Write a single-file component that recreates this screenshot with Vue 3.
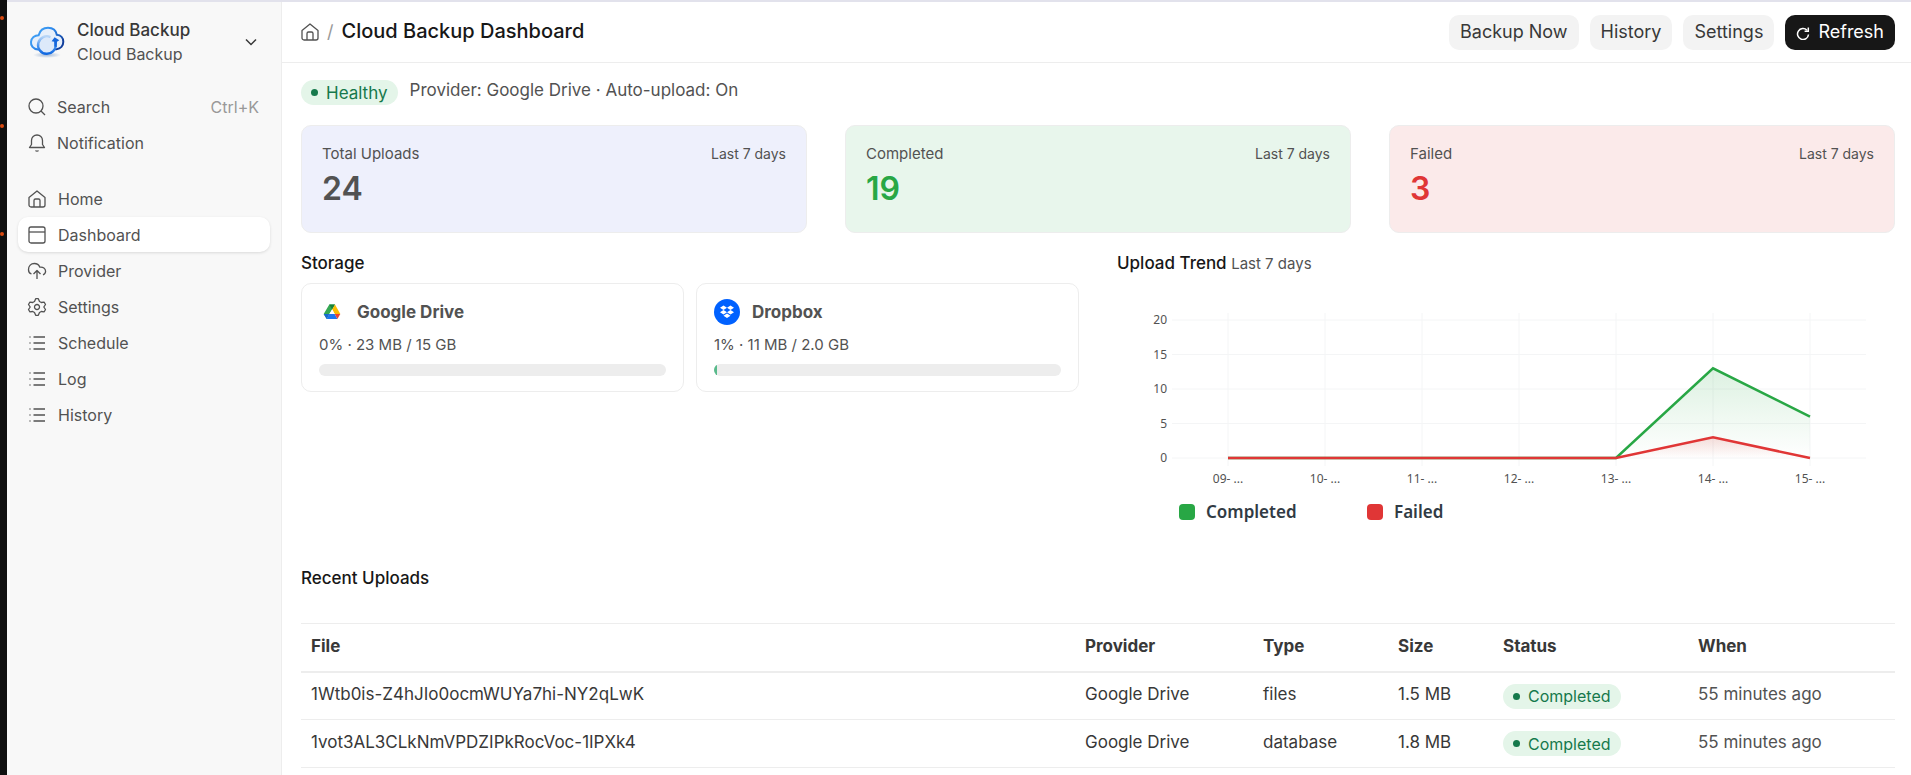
<template>
  <div class="desk">
    <div class="desk-edge" aria-hidden="true">
      <span v-for="n in 3" :key="n" class="desk-dot"></span>
    </div>

    <div class="window">
      <aside class="sidebar">
        <button type="button" class="app-switcher">
          <svg class="app-logo" viewBox="0 0 36 34" aria-hidden="true">
            <defs>
              <linearGradient id="cloudStroke" x1="0" y1="0" x2="1" y2="0.6">
                <stop offset="0" stop-color="#4fb0fb" />
                <stop offset="0.55" stop-color="#2b86ea" />
                <stop offset="1" stop-color="#123f9c" />
              </linearGradient>
              <linearGradient id="arrowStroke" x1="0" y1="0" x2="0" y2="1">
                <stop offset="0" stop-color="#b9d6f7" />
                <stop offset="0.6" stop-color="#3f8eee" />
                <stop offset="1" stop-color="#1168e0" />
              </linearGradient>
              <radialGradient id="cloudShadow">
                <stop offset="0" stop-color="#8fa9cc" stop-opacity="0.8" />
                <stop offset="1" stop-color="#8fa9cc" stop-opacity="0" />
              </radialGradient>
            </defs>
            <ellipse cx="18" cy="30" rx="14" ry="3" fill="url(#cloudShadow)" />
            <path
              d="M9 24.500C4 24 1.600 20.500 2 16.800C2.400 13 5.600 10.200 9.600 10.200C11 5 15 2.800 19 2.800C23.800 2.800 27 5.600 27.800 9.800C31.800 10 34.300 13 34.300 16.800C34.300 20.800 31.600 23.800 27.500 24.300Z"
              fill="#e6effb"
              stroke="url(#cloudStroke)"
              stroke-width="2"
            />
            <circle cx="17.800" cy="20" r="8.800" fill="#dde9fa" />
            <path
              d="M21.500 12A8.800 8.800 0 1 0 26.600 19V15"
              fill="none"
              stroke="url(#arrowStroke)"
              stroke-width="2.400"
            />
            <path d="M22.600 16.300L25.600 12.200L30.300 15.200L28 16.800L27.700 22L25.400 21.500L25.200 16.800Z" fill="#1667dc" />
          </svg>
          <span class="app-names">
            <span class="app-title">Cloud Backup</span>
            <span class="app-subtitle">Cloud Backup</span>
          </span>
          <svg class="chevron" viewBox="0 0 16 16" aria-hidden="true">
            <path d="M3 5.500L8 10.500L13 5.500" />
          </svg>
        </button>

        <nav class="nav">
          <a v-for="item in tools" :key="item.label" href="#" class="nav-item tool">
            <svg class="icon" viewBox="0 0 18 18" aria-hidden="true">
              <path v-for="d in icons[item.icon]" :key="d" :d="d" />
            </svg>
            <span>{{ item.label }}</span>
            <kbd v-if="item.shortcut" class="shortcut">{{ item.shortcut }}</kbd>
          </a>
        </nav>

        <nav class="nav">
          <a
            v-for="item in pages"
            :key="item.label"
            href="#"
            class="nav-item"
            :class="{ active: item.label === 'Dashboard' }"
          >
            <svg class="icon" viewBox="0 0 18 18" aria-hidden="true">
              <path v-for="d in icons[item.icon]" :key="d" :d="d" />
            </svg>
            <span>{{ item.label }}</span>
          </a>
        </nav>
      </aside>

      <main class="main">
        <header class="page-head">
          <div class="breadcrumb">
            <a href="#" class="home-link" aria-label="Home">
              <svg class="icon" viewBox="0 0 18 18" aria-hidden="true">
                <path v-for="d in icons.home" :key="d" :d="d" />
              </svg>
            </a>
            <span class="slash">/</span>
            <h1>Cloud Backup Dashboard</h1>
          </div>
          <div class="actions">
            <button type="button" class="btn">Backup Now</button>
            <button type="button" class="btn">History</button>
            <button type="button" class="btn">Settings</button>
            <button type="button" class="btn primary">
              <svg class="refresh" viewBox="0 0 14 14" aria-hidden="true">
                <path d="M12.500 8.500A5.500 5.500 0 1 1 11 4.200" />
                <path d="M12.300 1.500V5.200H8.600" />
              </svg>
              Refresh
            </button>
          </div>
        </header>

        <div class="content">
          <div class="status-line">
            <span class="badge healthy">Healthy</span>
            <span>Provider: Google Drive · Auto-upload: On</span>
          </div>

          <section class="stats">
            <div v-for="stat in stats" :key="stat.label" class="stat" :class="stat.tone">
              <div class="stat-head">
                <span class="stat-label">{{ stat.label }}</span>
                <span class="stat-range">Last 7 days</span>
              </div>
              <div class="stat-value">{{ stat.value }}</div>
            </div>
          </section>

          <div class="halves">
            <section>
              <h2>Storage</h2>
              <div class="drives">
                <div v-for="drive in drives" :key="drive.name" class="drive">
                  <div class="drive-name">
                    <svg v-if="drive.logo === 'google'" viewBox="0 0 26 26" aria-hidden="true">
                      <path d="M10.300 5.500H16L10 15.500L7.700 20L4.700 14.900Z" fill="#34a853" />
                      <path d="M10.300 5.500H16L13.200 10.500Z" fill="#188038" />
                      <path d="M16 5.500L21.300 15H15.700L13.200 10.500Z" fill="#fbbc04" />
                      <path d="M10.200 15H15.700L18.400 20H7.700Z" fill="#1e75f0" />
                      <path d="M4.700 15H10.200L7.700 20Z" fill="#1967d2" />
                      <path d="M15.700 15H21.300L18.400 20Z" fill="#ea4335" />
                      <path d="M13.200 10.500L15.700 15H10.500Z" fill="#fff" />
                    </svg>
                    <svg v-else viewBox="0 0 26 26" aria-hidden="true">
                      <circle cx="13" cy="13" r="13" fill="#0061ff" />
                      <path
                        d="M9.500 6.500L13 8.700L9.500 11L6 8.700ZM16.500 6.500L20 8.700L16.500 11L13 8.700ZM9.500 11L13 13.300L9.500 15.500L6 13.300ZM16.500 11L20 13.300L16.500 15.500L13 13.300ZM13 14.500L16.500 16.700L13 19L9.500 16.700Z"
                        fill="#fff"
                      />
                    </svg>
                    <span>{{ drive.name }}</span>
                  </div>
                  <div class="drive-usage">{{ drive.usage }}</div>
                  <div class="meter">
                    <div class="meter-fill" :style="{ width: drive.percent + '%' }"></div>
                  </div>
                </div>
              </div>
            </section>

            <section>
              <h2>Upload Trend <small>Last 7 days</small></h2>
              <svg class="chart" viewBox="0 0 778 262" role="img" aria-label="Upload trend">
                <defs>
                  <linearGradient id="fillCompleted" x1="0" y1="0" x2="0" y2="1">
                    <stop offset="0" stop-color="#28a745" stop-opacity="0.16" />
                    <stop offset="1" stop-color="#28a745" stop-opacity="0" />
                  </linearGradient>
                  <linearGradient id="fillFailed" x1="0" y1="0" x2="0" y2="1">
                    <stop offset="0" stop-color="#e03636" stop-opacity="0.16" />
                    <stop offset="1" stop-color="#e03636" stop-opacity="0" />
                  </linearGradient>
                </defs>
                <g v-for="tick in ticks" :key="tick">
                  <line class="grid" x1="55" x2="749" :y1="yOf(tick)" :y2="yOf(tick)" />
                  <text class="axis" x="50" :y="yOf(tick) + 4" text-anchor="end">{{ tick }}</text>
                </g>
                <g v-for="(day, i) in days" :key="day">
                  <line class="grid" :x1="xOf(i)" :x2="xOf(i)" y1="37" y2="190" />
                  <text class="axis" :x="xOf(i)" y="207" text-anchor="middle">{{ day }}- ...</text>
                </g>
                <g v-for="line in series" :key="line.name">
                  <path :d="areaPath(line.values)" :fill="`url(#fill${line.name})`" />
                  <path class="line" :d="linePath(line.values)" :stroke="line.color" />
                </g>
                <g v-for="(line, i) in series" :key="line.name">
                  <rect :x="62 + i * 188" y="228" width="16" height="16" rx="4" :fill="line.color" />
                  <text class="legend" :x="89 + i * 188" y="242">{{ line.name }}</text>
                </g>
              </svg>
            </section>
          </div>

          <section class="recent">
            <h2>Recent Uploads</h2>
            <table class="uploads">
              <thead>
                <tr>
                  <th>File</th>
                  <th class="col-provider">Provider</th>
                  <th class="col-type">Type</th>
                  <th class="col-size">Size</th>
                  <th class="col-status">Status</th>
                  <th class="col-when">When</th>
                </tr>
              </thead>
              <tbody>
                <tr v-for="upload in uploads" :key="upload.file">
                  <td>{{ upload.file }}</td>
                  <td>Google Drive</td>
                  <td>{{ upload.type }}</td>
                  <td>{{ upload.size }}</td>
                  <td class="status-cell"><span class="badge">Completed</span></td>
                  <td class="muted">55 minutes ago</td>
                </tr>
              </tbody>
            </table>
          </section>
        </div>
      </main>
    </div>
  </div>
</template>

<script setup>
  const list = ['M1.500 3H2.500M1.500 9H2.500M1.500 15H2.500', 'M5.500 3H17M5.500 9H17M5.500 15H17']

  // 18px grid, stroke only
  const icons = {
    search: ['M15 8A7 7 0 1 1 1 8A7 7 0 1 1 15 8Z', 'M13 13L17 17'],
    bell: [
      'M1.500 13.500H16.500L14.500 10.500V6.500C14.500 3 12 1 9 1C6 1 3.500 3 3.500 6.500V10.500Z',
      'M7.500 16.500C8 17.300 10 17.300 10.500 16.500',
    ],
    home: [
      'M1 7.500L9 1L17 7.500V15A2 2 0 0 1 15 17H3A2 2 0 0 1 1 15Z',
      'M6 17V10.500A1.500 1.500 0 0 1 7.500 9H10.500A1.500 1.500 0 0 1 12 10.500V17',
    ],
    dashboard: ['M3 1H15A2 2 0 0 1 17 3V15A2 2 0 0 1 15 17H3A2 2 0 0 1 1 15V3A2 2 0 0 1 3 1Z', 'M1 6H17'],
    upload: [
      'M3.500 12C1.300 11.300 0.500 9.700 0.500 7.700C0.500 4 3 1.500 6.300 1.500C9 1.500 11 3 11.800 5.200C15 4.700 17.600 6.500 17.600 9.300C17.600 11 16.600 12.200 15 12.800',
      'M9 17V8.500M5.500 12L9 8.500L12.500 12',
    ],
    gear: [
      'M7.700 0.700H10.300L11.500 3.500L13.300 4.500L16.200 4.200L17.500 6.500L15.800 9L17.500 11.500L16.200 13.800L13.300 13.500L11.500 14.500L10.300 17.300H7.700L6.500 14.500L4.700 13.500L1.800 13.800L0.500 11.500L2.200 9L0.500 6.500L1.800 4.200L4.700 4.500L6.500 3.500Z',
      'M11.500 9A2.500 2.500 0 1 1 6.500 9A2.500 2.500 0 1 1 11.500 9Z',
    ],
    list,
  }

  const tools = [
    { label: 'Search', icon: 'search', shortcut: 'Ctrl+K' },
    { label: 'Notification', icon: 'bell' },
  ]

  const pages = [
    { label: 'Home', icon: 'home' },
    { label: 'Dashboard', icon: 'dashboard' },
    { label: 'Provider', icon: 'upload' },
    { label: 'Settings', icon: 'gear' },
    { label: 'Schedule', icon: 'list' },
    { label: 'Log', icon: 'list' },
    { label: 'History', icon: 'list' },
  ]

  const stats = [
    { label: 'Total Uploads', value: 24, tone: 'total' },
    { label: 'Completed', value: 19, tone: 'completed' },
    { label: 'Failed', value: 3, tone: 'failed' },
  ]

  const drives = [
    { name: 'Google Drive', logo: 'google', usage: '0% · 23 MB / 15 GB', percent: 0 },
    { name: 'Dropbox', logo: 'dropbox', usage: '1% · 11 MB / 2.0 GB', percent: 1 },
  ]

  const ticks = [0, 5, 10, 15, 20]
  const days = ['09', '10', '11', '12', '13', '14', '15']
  const series = [
    { name: 'Completed', color: '#28a745', values: [0, 0, 0, 0, 0, 13, 6] },
    { name: 'Failed', color: '#e03636', values: [0, 0, 0, 0, 0, 3, 0] },
  ]

  const uploads = [
    { file: '1Wtb0is-Z4hJIo0ocmWUYa7hi-NY2qLwK', type: 'files', size: '1.5 MB' },
    { file: '1vot3AL3CLkNmVPDZIPkRocVoc-1IPXk4', type: 'database', size: '1.8 MB' },
  ]

  function xOf(index) {
    return 111 + index * 97
  }

  function yOf(value) {
    return 182 - value * 6.9
  }

  function linePath(values) {
    return 'M' + values.map((value, i) => `${xOf(i)} ${yOf(value)}`).join('L')
  }

  function areaPath(values) {
    return `${linePath(values)}L${xOf(values.length - 1)} ${yOf(0)}L${xOf(0)} ${yOf(0)}Z`
  }
</script>

<style>
  body {
    margin: 0;
    background-color: #fff;
  }
</style>

<style scoped>
  .desk {
    display: flex;
    min-height: 100vh;
    font-family: Inter, 'Liberation Sans', sans-serif;
    font-size: 17px;
    line-height: 24px;
    color: #383838;
  }

  .desk *,
  .desk {
    box-sizing: border-box;
  }

  .desk-edge {
    display: flex;
    flex: none;
    flex-direction: column;
    gap: 104px;
    width: 7px;
    padding-top: 16px;
    background-color: #0f0f0f;
  }

  .desk-dot {
    width: 4px;
    height: 4px;
    border-radius: 50%;
    background-color: #d9480f;
  }

  .window {
    display: flex;
    flex: 1;
    min-width: 0;
    border-top: 2px solid #e2e2ec;
  }

  button {
    border: none;
    font-family: inherit;
    cursor: pointer;
  }

  .icon {
    flex: none;
    width: 18px;
    height: 18px;
    fill: none;
    stroke: #525252;
    stroke-width: 1.3;
    stroke-linejoin: round;
    overflow: visible;
  }

  /* Sidebar */
  .sidebar {
    flex: none;
    width: 275px;
    padding: 14px 11px;
    border-right: 1px solid #ededed;
    background-color: #f8f8f8;
  }

  .app-switcher {
    display: flex;
    align-items: center;
    width: 100%;
    height: 52px;
    padding: 0 11px;
    background: none;
    text-align: left;
  }

  .app-logo {
    width: 36px;
    height: 34px;
  }

  .app-names {
    display: flex;
    flex: 1;
    flex-direction: column;
    margin-left: 12px;
    line-height: 24px;
    color: #525252;
  }

  .app-title {
    font-size: 17px;
    font-weight: 500;
    color: #383838;
  }

  .app-subtitle {
    font-size: 16px;
  }

  .chevron {
    width: 16px;
    height: 16px;
    fill: none;
    stroke: #383838;
    stroke-width: 1.5;
  }

  .nav {
    display: flex;
    flex-direction: column;
    gap: 1px;
    margin-top: 21px;
  }

  .nav-item {
    display: flex;
    align-items: center;
    gap: 12px;
    height: 35px;
    padding: 0 11px 0 10px;
    border-radius: 10px;
    color: #525252;
    font-size: 16px;
    text-decoration: none;
  }

  .nav-item.tool {
    gap: 11px;
  }

  .nav-item.active {
    background-color: #fff;
    box-shadow: 0 1px 3px rgba(0, 0, 0, 0.12);
  }

  .shortcut {
    margin-left: auto;
    font-family: inherit;
    color: #999;
  }

  /* Page head */
  .main {
    flex: 1;
    min-width: 0;
  }

  .page-head {
    display: flex;
    align-items: center;
    justify-content: space-between;
    height: 61px;
    padding: 0 16px 0 19px;
    border-bottom: 1px solid #ededed;
  }

  .breadcrumb {
    display: flex;
    align-items: center;
    gap: 8px;
  }

  .home-link {
    display: flex;
  }

  .slash {
    font-size: 18px;
    color: #999;
  }

  h1,
  h2 {
    margin: 0;
    font-weight: 500;
    color: #171717;
  }

  h1 {
    padding-bottom: 2px;
    font-size: 20px;
    line-height: 24px;
  }

  h2 {
    font-size: 17px;
    line-height: 24px;
  }

  .actions {
    display: flex;
    gap: 11px;
  }

  .btn {
    display: flex;
    align-items: center;
    gap: 8px;
    height: 35px;
    padding: 0 11px 2px;
    border-radius: 10px;
    background-color: #f3f3f3;
    color: #383838;
    font-size: 18px;
  }

  .btn.primary {
    background-color: #171717;
    color: #fff;
  }

  .refresh {
    width: 14px;
    height: 14px;
    margin-top: 3px;
    fill: none;
    stroke: currentColor;
    stroke-width: 1.5;
  }

  /* Content */
  .content {
    padding: 15px 16px 8px 19px;
  }

  .status-line {
    display: flex;
    gap: 12px;
    height: 47px;
    color: #525252;
  }

  .badge {
    display: inline-flex;
    align-items: center;
    gap: 8px;
    height: 25px;
    padding: 0 10px;
    border-radius: 13px;
    background-color: #e4f5e9;
    color: #16794c;
    font-size: 16px;
    vertical-align: middle;
  }

  .badge::before {
    content: '';
    width: 7px;
    height: 7px;
    border-radius: 50%;
    background-color: currentColor;
  }

  .badge.healthy {
    margin-top: 2px;
    font-size: 17px;
  }

  .stats {
    display: grid;
    grid-template-columns: repeat(3, 1fr);
    gap: 38px;
  }

  .stat {
    height: 108px;
    padding: 18px 20px;
    border: 1px solid #ededed;
    border-radius: 10px;
    color: #525252;
  }

  .stat.total {
    background-color: #eef0fc;
  }

  .stat.completed {
    background-color: #e8f6ec;
  }

  .stat.failed {
    background-color: #fbeaea;
  }

  .stat-head {
    display: flex;
    justify-content: space-between;
    line-height: 20px;
  }

  .stat-label {
    font-size: 15px;
  }

  .stat-range {
    font-size: 14px;
  }

  .stat-value {
    margin-top: 5px;
    font-size: 32px;
    font-weight: 600;
    line-height: 40px;
  }

  .stat.completed .stat-value {
    color: #28a745;
  }

  .stat.failed .stat-value {
    color: #e03636;
  }

  .halves {
    display: grid;
    grid-template-columns: 1fr 1fr;
    gap: 38px;
    margin-top: 18px;
  }

  h2 small {
    font-size: 15px;
    font-weight: 400;
    color: #525252;
  }

  .drives {
    display: grid;
    grid-template-columns: 1fr 1fr;
    gap: 12px;
    margin-top: 8px;
  }

  .drive {
    padding: 15px 17px;
    border: 1px solid #ededed;
    border-radius: 10px;
    color: #525252;
  }

  .drive-name {
    display: flex;
    align-items: center;
    gap: 12px;
    font-weight: 700;
    line-height: 26px;
  }

  .drive-name svg {
    width: 26px;
    height: 26px;
  }

  .drive-usage {
    margin: 8px 0 7px;
    font-size: 15px;
    line-height: 24px;
  }

  .meter {
    height: 12px;
    overflow: hidden;
    border-radius: 6px;
    background-color: #ededed;
  }

  .meter-fill {
    height: 100%;
    background-color: #59ba8b;
  }

  .chart {
    display: block;
    width: 100%;
  }

  .grid {
    stroke: #f4f5f6;
    stroke-width: 1;
  }

  .line {
    fill: none;
    stroke-width: 2.5;
  }

  .axis {
    font-family: 'Noto Sans', sans-serif;
    font-size: 12px;
    fill: #525252;
  }

  .legend {
    font-family: 'Noto Sans', sans-serif;
    font-size: 17px;
    font-weight: 600;
    fill: #313b44;
  }

  .recent {
    margin-top: 28px;
  }

  .uploads {
    width: 100%;
    margin-top: 33px;
    border-collapse: collapse;
    table-layout: fixed;
    text-align: left;
  }

  .uploads th,
  .uploads td {
    height: 48px;
    padding: 0 10px 4px;
    border-top: 1px solid #ededed;
    border-bottom: 1px solid #ededed;
  }

  .uploads th {
    padding-bottom: 2px;
    border-bottom-width: 2px;
    font-weight: 700;
  }

  .uploads .status-cell {
    padding-bottom: 0;
  }

  .col-provider {
    width: 178px;
  }

  .col-type {
    width: 135px;
  }

  .col-size {
    width: 105px;
  }

  .col-status {
    width: 195px;
  }

  .col-when {
    width: 207px;
  }

  .muted {
    color: #525252;
  }
</style>
